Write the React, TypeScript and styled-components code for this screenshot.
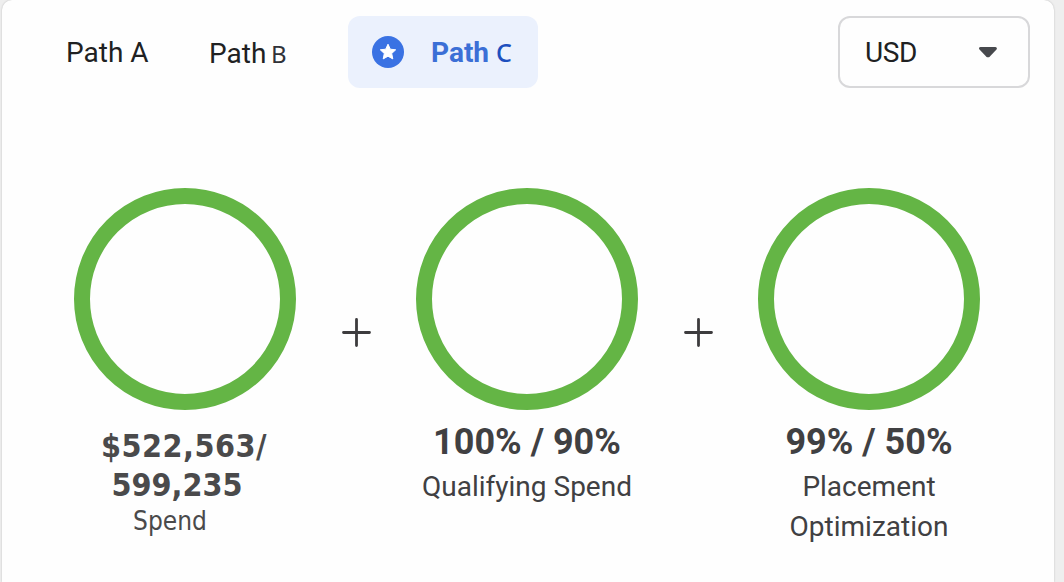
import styled, { createGlobalStyle } from "styled-components";

export default function App() {
  return (
    <>
      <GlobalStyle />
      <Card>
        <Header>
          <Tabs>
            <Tab width={143}>
              <TabLabel width={82}>Path A</TabLabel>
            </Tab>
            <Tab width={139} offset={1}>
              <TabLabel width={56}>Path</TabLabel>
              <Letter>B</Letter>
            </Tab>
            <ActiveTab>
              <StarBadge />
              <TabLabel width={58} bold>Path</TabLabel>
              <Letter active>C</Letter>
            </ActiveTab>
          </Tabs>
          <Select>
            USD
            <Caret />
          </Select>
        </Header>
        <Metrics>
          <Metric>
            <Ring />
            <Amount>
              <AmountLine shift={-1} spacing={.5}>$522,563/</AmountLine>
              <AmountLine shift={-8}>599,235</AmountLine>
            </Amount>
            <SmallCaption>Spend</SmallCaption>
          </Metric>
          <Plus />
          <Metric>
            <Ring />
            <Value>100% / 90%</Value>
            <Caption>Qualifying Spend</Caption>
          </Metric>
          <Plus />
          <Metric>
            <Ring />
            <Value>99% / 50%</Value>
            <Caption>Placement Optimization</Caption>
          </Metric>
        </Metrics>
      </Card>
    </>
  );
}

function StarBadge() {
  return (
    <Star viewBox="0 0 32 32">
      <circle cx="16" cy="16" r="16" fill="#3a72e3" />
      <path
        d="M16 8.2l2.3 5 5.4.6-4 3.7 1.1 5.4-4.8-2.7-4.8 2.7 1.1-5.4-4-3.7 5.4-.6z"
        fill="#fff"
        stroke="#fff"
        strokeLinejoin="round"
      />
    </Star>
  );
}

function Caret() {
  return (
    <svg width="20" height="12" viewBox="0 0 20 12">
      <path
        d="M2.6 2.4h14.8L11 9.3q-1 .9-2 0z"
        fill="#47494d"
        stroke="#47494d"
        strokeWidth="3"
        strokeLinejoin="round"
      />
    </svg>
  );
}

function Plus() {
  return (
    <PlusIcon viewBox="0 0 30 30">
      <path d="M15.5 2.5v26M2.5 15.5h26" stroke="#3d3c3e" strokeWidth="2.8" strokeLinecap="round" />
    </PlusIcon>
  );
}

const GlobalStyle = createGlobalStyle`
  * {
    box-sizing: border-box;
  }

  body {
    margin: 0;
    overflow: hidden;
    background: #eeeeee;
    font-family: Roboto, sans-serif;
  }
`;

const Card = styled.main`
  width: 1052px;
  height: 582px;
  margin-left: 2px;
  padding: 16px 24px 0 64px;
  background: #fefefe;
  border-radius: 10px 10px 0 0;
  box-shadow: 0 0 2px rgba(0, 0, 0, .22);
`;

const Header = styled.header`
  display: flex;
  justify-content: space-between;
  height: 72px;
`;

const Tabs = styled.nav`
  display: flex;
`;

const Tab = styled.div<{ width: number; offset?: number }>`
  display: flex;
  align-items: baseline;
  width: ${props => props.width}px;
  padding-top: ${props => 20 + (props.offset || 0)}px;
  color: #202122;
  line-height: 33px;
`;

const TabLabel = styled.span<{ width: number; bold?: boolean }>`
  width: ${props => props.width}px;
  font-size: 28px;
  font-weight: ${props => props.bold ? 700 : 400};
  white-space: nowrap;
`;

const Letter = styled.span<{ active?: boolean }>`
  margin-left: ${props => props.active ? 7 : 6}px;
  font-family: "Noto Sans", sans-serif;
  font-size: ${props => props.active ? 25 : 24}px;
  font-weight: ${props => props.active ? 500 : 400};
  color: ${props => props.active ? "#1d4fbe" : "#303238"};
`;

const ActiveTab = styled.div`
  display: flex;
  align-items: baseline;
  width: 190px;
  padding: 20px 24px 0;
  border-radius: 12px;
  background: #ebf1fd;
  color: #3b6fd6;
  line-height: 33px;
`;

const Star = styled.svg`
  align-self: flex-start;
  flex-shrink: 0;
  width: 32px;
  height: 32px;
  margin-right: 27px;
`;

const Select = styled.div`
  display: flex;
  align-items: center;
  justify-content: space-between;
  width: 192px;
  padding: 0 30px 0 25px;
  border: 2px solid #d8d8da;
  border-radius: 12px;
  color: #202122;
  font-size: 28px;
  letter-spacing: -.4px;
`;

const Metrics = styled.section`
  display: flex;
  margin: 100px 0 0 8px;
`;

const Metric = styled.div`
  display: flex;
  flex-direction: column;
  align-items: center;
  width: 222px;
  color: #404042;
  text-align: center;
`;

const Ring = styled.div`
  width: 222px;
  height: 222px;
  border: 16px solid #64b545;
  border-radius: 50%;
`;

const PlusIcon = styled.svg`
  flex-shrink: 0;
  width: 30px;
  height: 30px;
  margin: 129px 45px 0;
`;

const Value = styled.strong`
  margin-top: 11px;
  font-size: 36px;
  line-height: 42px;
  white-space: nowrap;
`;

const Caption = styled.span`
  margin-top: 4px;
  font-size: 28px;
  line-height: 40px;
`;

const Amount = styled.strong`
  margin-top: 17px;
  color: #4a4a4b;
  font-family: "DejaVu Sans Condensed", "DejaVu Sans", sans-serif;
  font-size: 32px;
  font-stretch: condensed;
  line-height: 39px;
`;

const AmountLine = styled.span<{ shift: number; spacing?: number }>`
  display: block;
  margin-left: ${props => props.shift * 2}px;
  letter-spacing: ${props => props.spacing || 0}px;
`;

const SmallCaption = styled.span`
  margin: -1px 30px 0 0;
  color: #4a4a4b;
  font-family: "DejaVu Sans Condensed", "DejaVu Sans", sans-serif;
  font-size: 26px;
  font-stretch: condensed;
  line-height: 34px;
`;
